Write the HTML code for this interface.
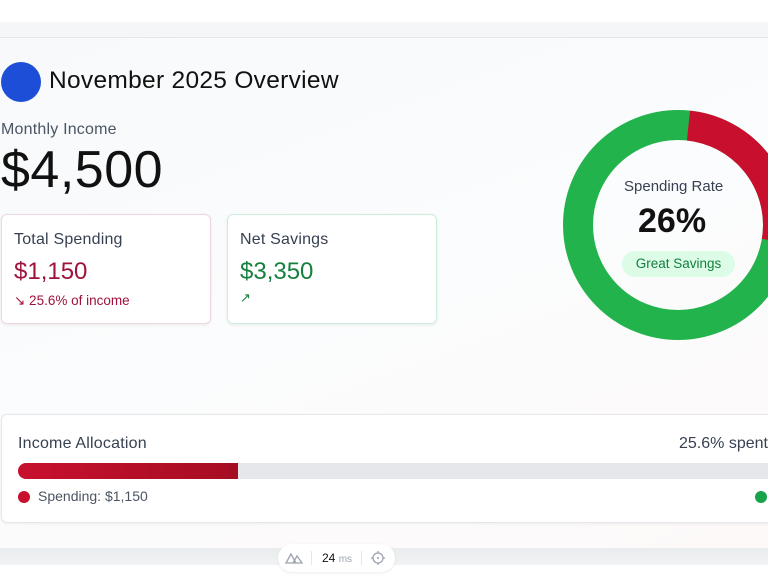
<!DOCTYPE html>
<html><head><meta charset="utf-8"><style>
*{margin:0;padding:0;box-sizing:border-box}
body{width:768px;height:576px;overflow:hidden;background:#fff;font-family:"Liberation Sans",sans-serif;position:relative;color:#111827}
.band{position:absolute;left:0;top:22px;width:768px;height:16px;background:#f5f6f7;border-bottom:1px solid #e5e7eb}
.main{position:absolute;left:0;top:38px;width:768px;height:510px;background:linear-gradient(160deg,#f7f9fb 0%,#fbfcfd 50%,#fdf9f9 100%)}
.bot{position:absolute;left:0;top:548px;width:768px;height:17px;background:linear-gradient(#e9ecee,#f1f3f4)}
.t{position:absolute;white-space:nowrap}
.card{position:absolute;background:#fff;border-radius:6px}
</style></head><body>
<div class="band"></div>
<div class="main"></div>
<div class="bot"></div>
<div style="position:absolute;left:1px;top:62px;width:40px;height:40px;border-radius:50%;background:#1d4ed8"></div>
<div class="t" style="left:49px;top:67px;font-size:24.5px;letter-spacing:0.3px;color:#111">November 2025 Overview</div>
<div class="t" style="left:1px;top:121px;font-size:16px;letter-spacing:0.2px;color:#4b5563">Monthly Income</div>
<div class="t" style="left:1px;top:140px;font-size:52px;letter-spacing:0.5px;color:#111">$4,500</div>
<div class="card" style="left:1px;top:214px;width:210px;height:110px;border:1px solid #f0d6de;box-shadow:0 1px 3px rgba(0,0,0,.08)">
<div class="t" style="left:12px;top:16px;font-size:16px;letter-spacing:0.2px;color:#374151">Total Spending</div>
<div class="t" style="left:12px;top:43px;font-size:24px;color:#9f1239">$1,150</div>
<div class="t" style="left:12px;top:78px;font-size:13.5px;color:#9f1239">↘ 25.6% of income</div>
</div>
<div class="card" style="left:227px;top:214px;width:210px;height:110px;border:1px solid #cdeedd;box-shadow:0 1px 3px rgba(0,0,0,.08)">
<div class="t" style="left:12px;top:16px;font-size:16px;letter-spacing:0.2px;color:#374151">Net Savings</div>
<div class="t" style="left:12px;top:43px;font-size:24px;color:#15803d">$3,350</div>
<div class="t" style="left:12px;top:75px;font-size:13px;color:#15803d">↗</div>
</div>
<svg style="position:absolute;left:560px;top:107px" width="240" height="240" viewBox="0 0 240 240">
<circle cx="118" cy="118" r="100" fill="none" stroke="#22b34c" stroke-width="30"/>
<circle cx="118" cy="118" r="100" fill="none" stroke="#c8102e" stroke-width="30" stroke-dasharray="163 1000" transform="rotate(-84 118 118)"/>
</svg>
<div class="t" style="left:624px;top:178px;font-size:15px;color:#374151">Spending Rate</div>
<div class="t" style="left:638px;top:202px;font-size:34px;font-weight:bold;color:#111">26%</div>
<div style="position:absolute;left:622px;top:251px;width:113px;height:26px;border-radius:13px;background:#dcfce7;color:#15803d;font-size:13.5px;text-align:center;line-height:26px">Great Savings</div>
<div class="card" style="left:1px;top:414px;width:780px;height:109px;border:1px solid #e5e7eb;box-shadow:0 1px 3px rgba(0,0,0,.06)">
<div class="t" style="left:16px;top:20px;font-size:16px;letter-spacing:0.2px;color:#374151">Income Allocation</div>
<div class="t" style="left:677px;top:20px;font-size:16px;color:#374151">25.6% spent</div>
<div style="position:absolute;left:16px;top:48px;width:760px;height:16px;border-radius:8px;background:#e5e7eb;overflow:hidden"><div style="width:220px;height:16px;background:linear-gradient(90deg,#c8102e,#a50d23)"></div></div>
<div style="position:absolute;left:16px;top:76px;width:12px;height:12px;border-radius:50%;background:#c8102e"></div>
<div class="t" style="left:36px;top:73px;font-size:14px;color:#4b5563">Spending: $1,150</div>
<div style="position:absolute;left:753px;top:76px;width:12px;height:12px;border-radius:50%;background:#16a34a"></div>
</div>
<div style="position:absolute;left:278px;top:544px;width:117px;height:28px;border-radius:14px;background:#fff;box-shadow:0 1px 3px rgba(0,0,0,.08)">
<svg style="position:absolute;left:7px;top:7px" width="18" height="14" viewBox="0 0 18 14"><path d="M1 12 L6 3 L11 12 Z M8 12 L12 5 L17 12 Z" fill="none" stroke="#9ca3af" stroke-width="1.3"/></svg>
<div style="position:absolute;left:33px;top:7px;width:1px;height:14px;background:#e5e7eb"></div>
<div class="t" style="left:44px;top:7px;font-size:12px;color:#111">24 <span style="font-size:10px;color:#9ca3af">ms</span></div>
<div style="position:absolute;left:83px;top:7px;width:1px;height:14px;background:#e5e7eb"></div>
<svg style="position:absolute;left:92px;top:6px" width="16" height="16" viewBox="0 0 16 16"><circle cx="8" cy="8" r="5" fill="none" stroke="#9ca3af" stroke-width="1.3"/><circle cx="8" cy="8" r="1" fill="#9ca3af"/><path d="M8 1v2M8 13v2M1 8h2M13 8h2" stroke="#9ca3af" stroke-width="1.3"/></svg>
</div>
</body></html>
